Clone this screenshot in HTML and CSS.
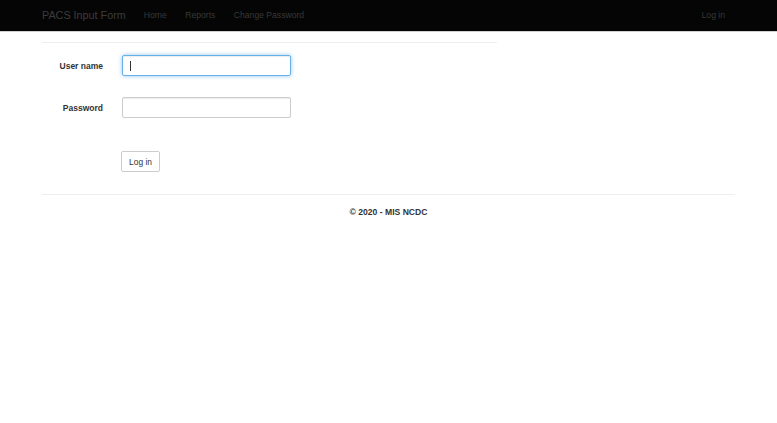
FILE: index.html
```html
<!DOCTYPE html>
<html>
<head>
<meta charset="utf-8">
<title>Log in - PACS Input Form</title>
<link rel="stylesheet" href="styles.css">
</head>
<body>
<nav class="navbar">
  <div class="nav-inner">
    <a class="brand" href="#">PACS Input Form</a>
    <ul class="nav-links">
      <li><a href="#">Home</a></li>
      <li><a href="#">Reports</a></li>
      <li><a href="#">Change Password</a></li>
    </ul>
    <ul class="nav-right">
      <li><a href="#">Log in</a></li>
    </ul>
  </div>
</nav>
<div class="container">
  <div class="form-col">
    <hr class="top-rule">
    <form class="login-form">
      <div class="form-row">
        <label class="field-label" for="user">User name</label>
        <div class="field-input focused"><span class="caret"></span></div>
      </div>
      <div class="form-row">
        <label class="field-label" for="pass">Password</label>
        <div class="field-input"></div>
      </div>
      <div class="form-row action-row">
        <span class="field-label"></span>
        <button type="button" class="btn">Log in</button>
      </div>
    </form>
  </div>
  <hr class="footer-rule">
  <footer class="footer">© 2020 - MIS NCDC</footer>
</div>
</body>
</html>
```
FILE: styles.css
```css
* { box-sizing: border-box; }
html, body { margin: 0; padding: 0; background: #fff; }
body {
  font-family: "Liberation Sans", Arial, Helvetica, sans-serif;
  font-size: 8.4px;
  line-height: 12px;
  color: #333;
}
.navbar {
  height: 32px;
  background: #050505;
  border-bottom: 1px solid #cfcfcf;
}
.nav-inner {
  display: flex;
  align-items: center;
  height: 31px;
  padding: 0 42px;
}
.brand {
  font-size: 10.8px;
  color: #3c3c3c;
  text-decoration: none;
  margin-right: 18px;
  line-height: 31px;
}
.nav-links, .nav-right {
  list-style: none;
  margin: 0;
  padding: 0;
  display: flex;
  gap: 18.5px;
}
.nav-right { margin-left: auto; margin-right: 10px; }
.nav-links a, .nav-right a {
  color: #383838;
  text-decoration: none;
  font-size: 8.6px;
  line-height: 31px;
}
.container {
  padding: 0 42px;
}
.form-col { width: 455px; }
.top-rule {
  margin: 10px 0 0;
  border: 0;
  border-top: 1px solid #eee;
  height: 0;
}
.login-form {
  padding-top: 12px;
}
.form-row {
  display: flex;
  align-items: center;
  height: 21px;
  margin-bottom: 21px;
}
.action-row { margin-top: 33px; height: 21px; margin-bottom: 22px; }
.field-label {
  width: 61px;
  text-align: right;
  font-weight: bold;
  font-size: 8.5px;
  margin-right: 19px;
}
.field-input {
  width: 169px;
  height: 21px;
  border: 1px solid #ccc;
  border-radius: 2px;
  box-shadow: inset 0 1px 1px rgba(0,0,0,0.075);
  position: relative;
}
.field-input.focused {
  border-color: #66afe9;
  box-shadow: inset 0 1px 1px rgba(0,0,0,.075), 0 0 4px rgba(102,175,233,0.7);
}
.caret {
  position: absolute;
  left: 7px;
  top: 5px;
  width: 1px;
  height: 10px;
  background: #333;
}
.btn {
  margin-left: -1px;
  width: 39px;
  height: 21px;
  padding: 0;
  background: #fff;
  border: 1px solid #ccc;
  border-radius: 2px;
  font-family: inherit;
  font-size: 8.4px;
  color: #333;
}
.footer-rule {
  margin: 0;
  border: 0;
  border-top: 1px solid #eee;
  height: 0;
}
.footer {
  text-align: center;
  font-weight: bold;
  font-size: 8.6px;
  padding-top: 11px;
}
```
